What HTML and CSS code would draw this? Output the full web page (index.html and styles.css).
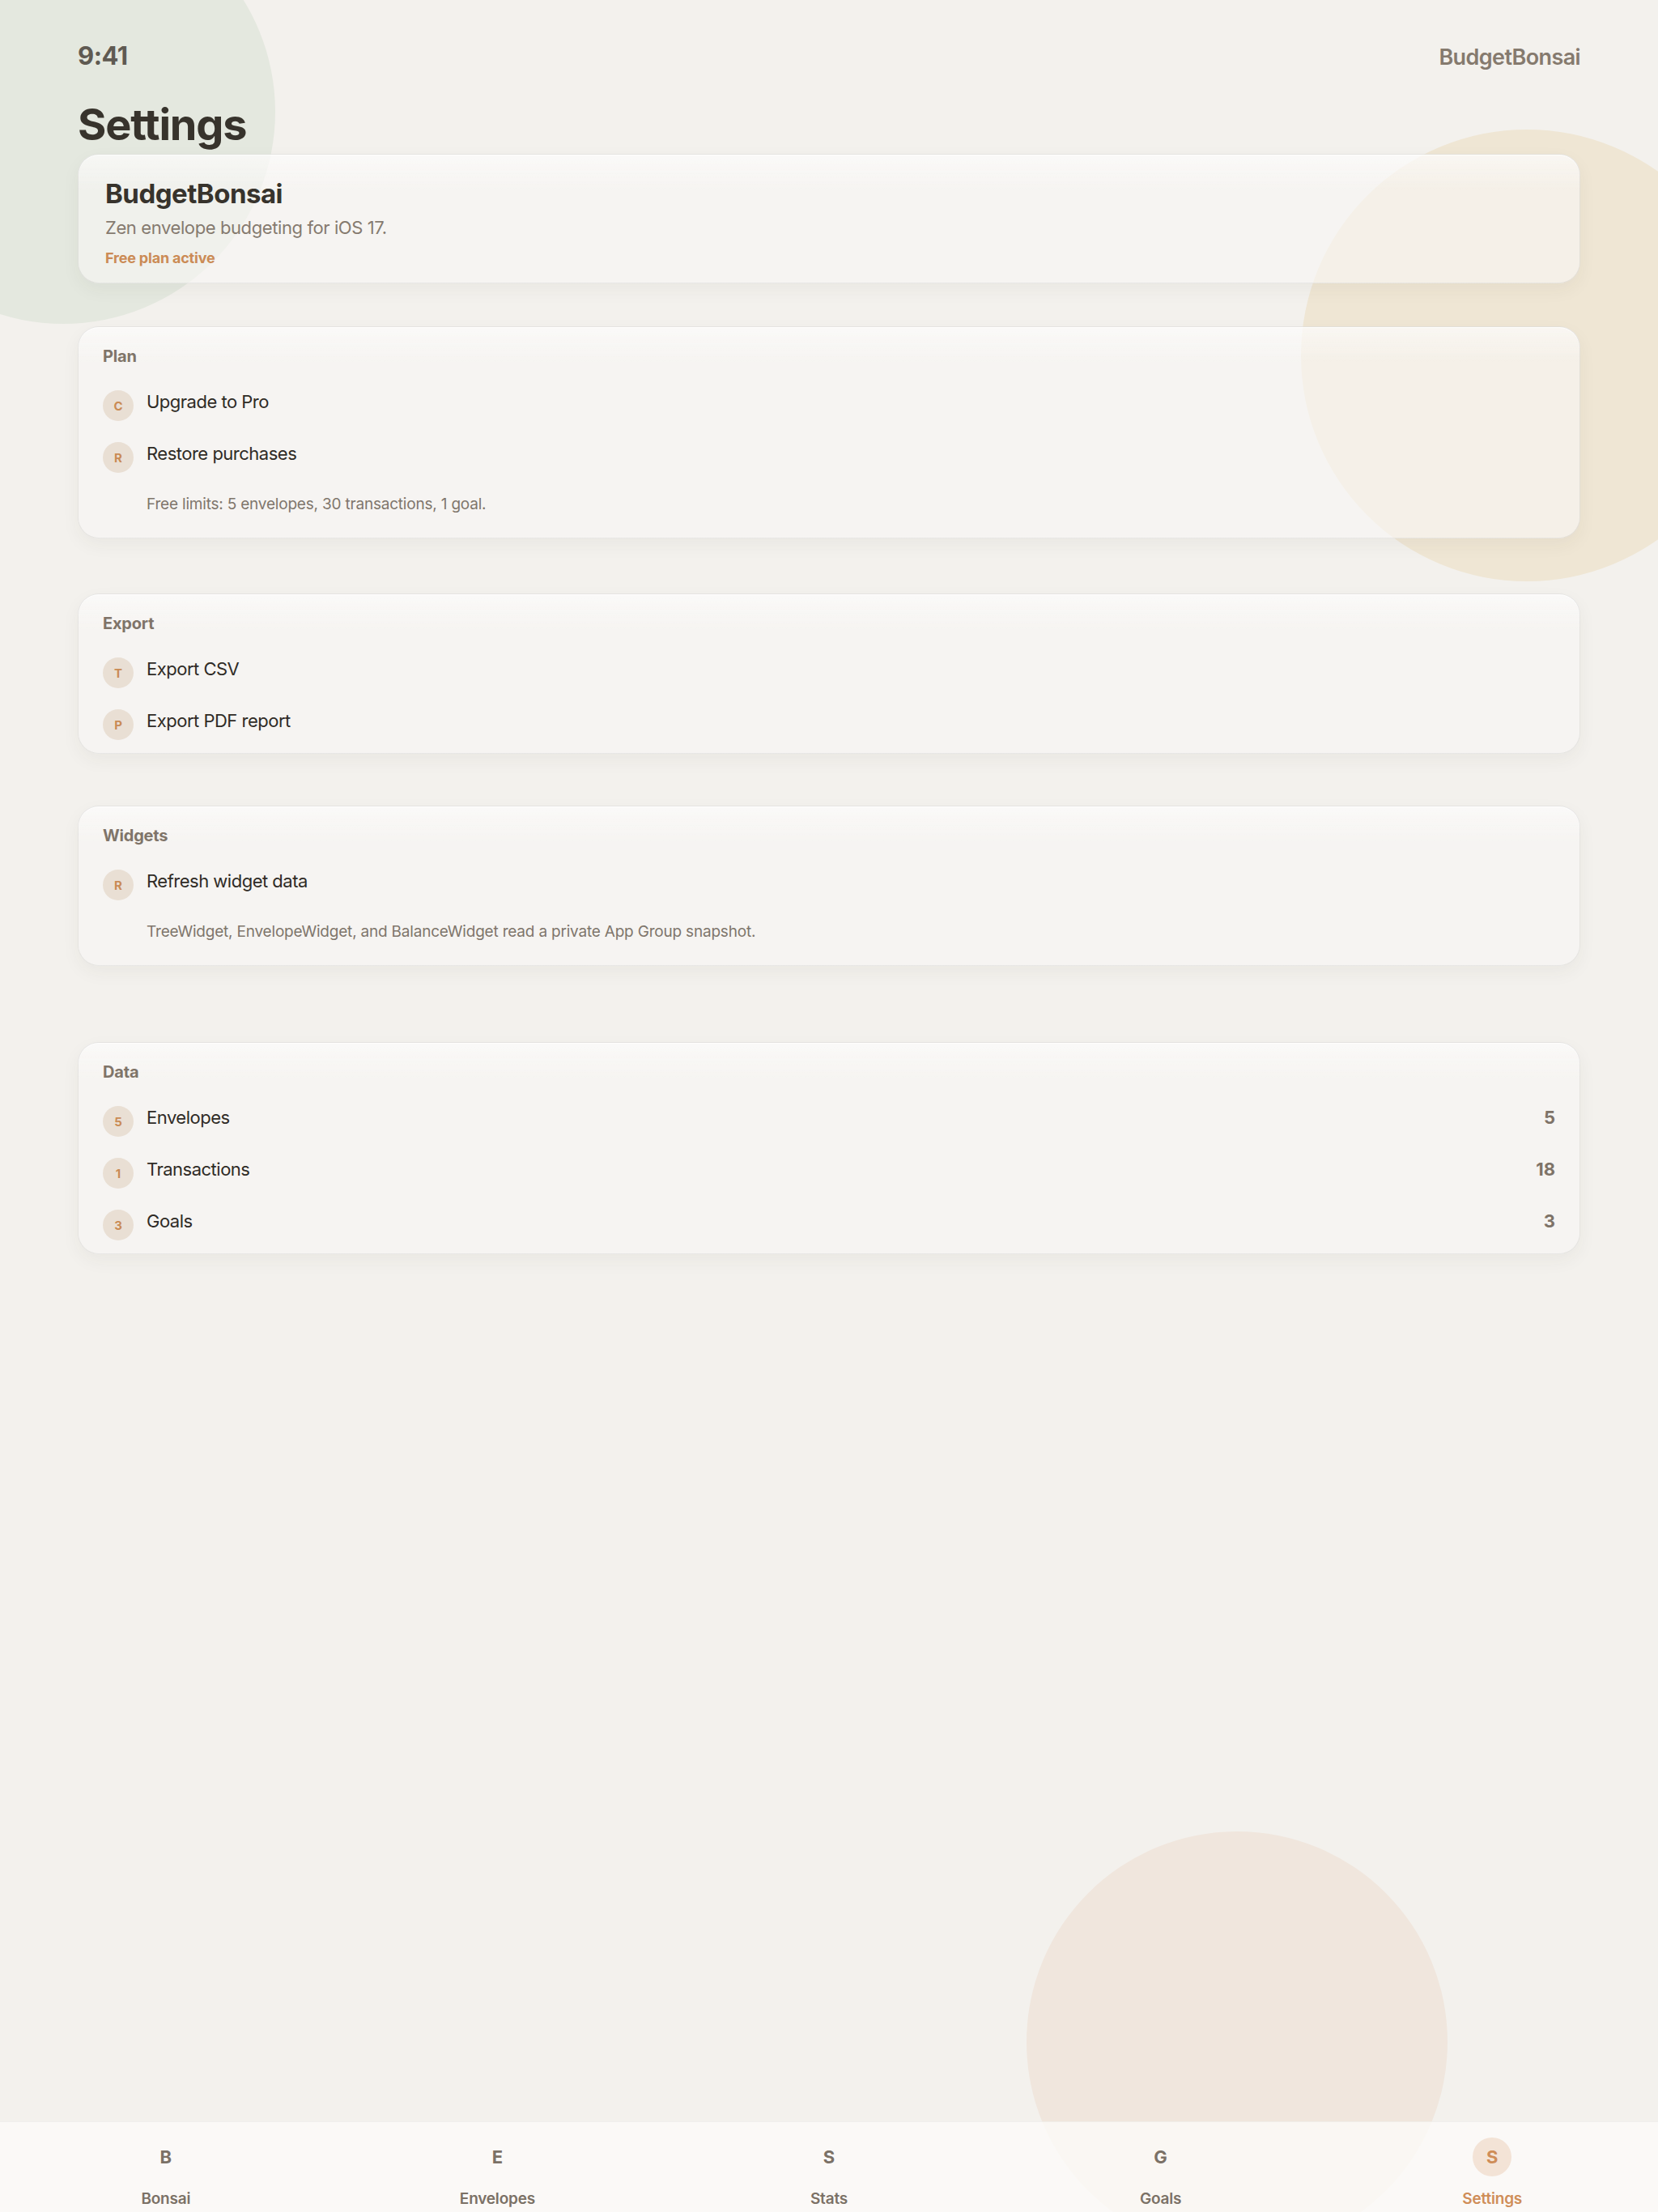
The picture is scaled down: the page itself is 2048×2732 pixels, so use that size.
FILE: index.html
```html
<!DOCTYPE html>
<html lang="en">
<head>
    <meta charset="UTF-8">
    <meta name="viewport" content="width=device-width, initial-scale=1.0">
    <title>BudgetBonsai - Settings</title>
    <link rel="stylesheet" href="styles.css">
</head>
<body>
    <div class="app">
        <!-- soft background shapes -->
        <div class="blob blob-sage"></div>
        <div class="blob blob-sand"></div>
        <div class="blob blob-clay"></div>

        <main class="content">
            <header class="status-bar">
                <span class="clock">9:41</span>
                <span class="app-name">BudgetBonsai</span>
            </header>

            <h1 class="page-title">Settings</h1>

            <!-- App summary -->
            <section class="card hero">
                <h2 class="hero-title">BudgetBonsai</h2>
                <p class="hero-text">Zen envelope budgeting for iOS 17.</p>
                <p class="hero-plan">Free plan active</p>
            </section>

            <!-- Plan -->
            <section class="card group group-plan">
                <h3 class="group-title">Plan</h3>
                <div class="row">
                    <span class="badge">C</span>
                    <span class="row-label">Upgrade to Pro</span>
                </div>
                <div class="row">
                    <span class="badge">R</span>
                    <span class="row-label">Restore purchases</span>
                </div>
                <p class="group-note">Free limits: 5 envelopes, 30 transactions, 1 goal.</p>
            </section>

            <!-- Export -->
            <section class="card group group-export">
                <h3 class="group-title">Export</h3>
                <div class="row">
                    <span class="badge">T</span>
                    <span class="row-label">Export CSV</span>
                </div>
                <div class="row">
                    <span class="badge">P</span>
                    <span class="row-label">Export PDF report</span>
                </div>
            </section>

            <!-- Widgets -->
            <section class="card group group-widgets">
                <h3 class="group-title">Widgets</h3>
                <div class="row">
                    <span class="badge">R</span>
                    <span class="row-label">Refresh widget data</span>
                </div>
                <p class="group-note">TreeWidget, EnvelopeWidget, and BalanceWidget read a private App Group snapshot.</p>
            </section>

            <!-- Data counts -->
            <section class="card group group-data">
                <h3 class="group-title">Data</h3>
                <div class="row">
                    <span class="badge">5</span>
                    <span class="row-label">Envelopes</span>
                    <span class="row-value">5</span>
                </div>
                <div class="row">
                    <span class="badge">1</span>
                    <span class="row-label">Transactions</span>
                    <span class="row-value">18</span>
                </div>
                <div class="row">
                    <span class="badge">3</span>
                    <span class="row-label">Goals</span>
                    <span class="row-value">3</span>
                </div>
            </section>
        </main>

        <!-- Tab bar -->
        <nav class="tab-bar">
            <a class="tab" href="#">
                <span class="tab-icon">B</span>
                <span class="tab-label">Bonsai</span>
            </a>
            <a class="tab" href="#">
                <span class="tab-icon">E</span>
                <span class="tab-label">Envelopes</span>
            </a>
            <a class="tab" href="#">
                <span class="tab-icon">S</span>
                <span class="tab-label">Stats</span>
            </a>
            <a class="tab" href="#">
                <span class="tab-icon">G</span>
                <span class="tab-label">Goals</span>
            </a>
            <a class="tab active" href="#">
                <span class="tab-icon">S</span>
                <span class="tab-label">Settings</span>
            </a>
        </nav>
    </div>
</body>
</html>
```

FILE: styles.css
```css
* {
    box-sizing: border-box;
}

body {
    margin: 0;
    font-family: Inter, "Noto Sans", "Liberation Sans", sans-serif;
    background: #f3f1ed;
    color: #2f2b26;
}

h1, h2, h3, p {
    margin: 0;
}

.app {
    position: relative;
    width: 2048px;
    height: 2732px;
    overflow: hidden;
    display: flex;
    flex-direction: column;
}

/* Background shapes */
.blob {
    position: absolute;
    border-radius: 50%;
    z-index: 0;
}

.blob-sage {
    left: -184px;
    top: -124px;
    width: 524px;
    height: 524px;
    background: #e4e8df;
}

.blob-sand {
    left: 1607px;
    top: 160px;
    width: 558px;
    height: 558px;
    background: #efe6d4;
}

.blob-clay {
    left: 1268px;
    top: 2262px;
    width: 520px;
    height: 520px;
    background: #f0e6dd;
}

.content {
    position: relative;
    z-index: 1;
    flex: 1;
    padding: 0 96px;
}

/* Status bar */
.status-bar {
    display: flex;
    justify-content: space-between;
    align-items: baseline;
    padding-top: 49px;
    height: 89px;
}

.clock {
    font-size: 31px;
    line-height: 40px;
    font-weight: 700;
    color: #5f5a52;
    letter-spacing: -0.5px;
}

.app-name {
    font-size: 27px;
    line-height: 40px;
    font-weight: 600;
    color: #857a6e;
    letter-spacing: -0.6px;
}

.page-title {
    margin-top: 33px;
    font-size: 54px;
    line-height: 64px;
    font-weight: 700;
    color: #37332c;
    letter-spacing: -1.2px;
}

/* Cards */
.card {
    background: linear-gradient(rgba(255, 255, 255, 0.45), rgba(255, 255, 255, 0) 44px), rgba(248, 247, 245, 0.6);
    border: 1px solid rgba(0, 0, 0, 0.07);
    border-radius: 26px;
    box-shadow: 0 8px 22px rgba(60, 50, 40, 0.05), inset 0 1px 0 rgba(255, 255, 255, 0.7);
}

.hero {
    margin-top: 4px;
    padding: 28px 33px 18px;
}

.hero-title {
    font-size: 33px;
    line-height: 40px;
    font-weight: 700;
    color: #37332c;
    letter-spacing: -0.5px;
}

.hero-text {
    margin-top: 7px;
    font-size: 22px;
    line-height: 30px;
    color: #857a6f;
    letter-spacing: -0.4px;
}

.hero-plan {
    margin-top: 11px;
    font-size: 18px;
    line-height: 24px;
    font-weight: 700;
    color: #cb8b55;
    letter-spacing: -0.2px;
}

.group {
    padding: 23px 30px 3px;
}

.group-plan {
    margin-top: 53px;
}

.group-export {
    margin-top: 68px;
}

.group-widgets {
    margin-top: 64px;
}

.group-data {
    margin-top: 94px;
}

.group-title {
    font-size: 20px;
    line-height: 26px;
    font-weight: 700;
    color: #7f7469;
    letter-spacing: -0.2px;
    margin-bottom: 16px;
}

.row {
    display: flex;
    align-items: center;
    height: 64px;
}

.badge {
    flex: none;
    width: 38px;
    height: 38px;
    border-radius: 50%;
    background: #e9dfd4;
    color: #c98b55;
    font-size: 15px;
    font-weight: 700;
    display: flex;
    align-items: center;
    justify-content: center;
    margin-right: 16px;
}

.row-label {
    flex: 1;
    padding-bottom: 9px;
    font-size: 22px;
    line-height: 27px;
    color: #2f2b26;
    letter-spacing: -0.5px;
}

.row-value {
    padding-bottom: 9px;
    font-size: 22px;
    line-height: 27px;
    font-weight: 700;
    color: #7e7368;
}

.group-note {
    margin: 14px 0 26px 54px;
    font-size: 19px;
    line-height: 24px;
    color: #7f766c;
    letter-spacing: -0.2px;
}

/* Tab bar */
.tab-bar {
    position: relative;
    z-index: 1;
    height: 112px;
    display: grid;
    grid-template-columns: repeat(5, 1fr);
    background: rgba(252, 251, 249, 0.8);
    border-top: 1px solid rgba(0, 0, 0, 0.04);
}

.tab {
    display: flex;
    flex-direction: column;
    align-items: center;
    padding-top: 19px;
    text-decoration: none;
    color: #7b7166;
}

.tab-icon {
    width: 48px;
    height: 48px;
    border-radius: 50%;
    display: flex;
    align-items: center;
    justify-content: center;
    font-size: 22px;
    font-weight: 700;
}

.tab-label {
    margin-top: 17px;
    font-size: 19px;
    line-height: 22px;
    font-weight: 600;
    letter-spacing: -0.2px;
}

.tab.active {
    color: #cf8d58;
}

.tab.active .tab-icon {
    background: #f3e3d6;
}
```
